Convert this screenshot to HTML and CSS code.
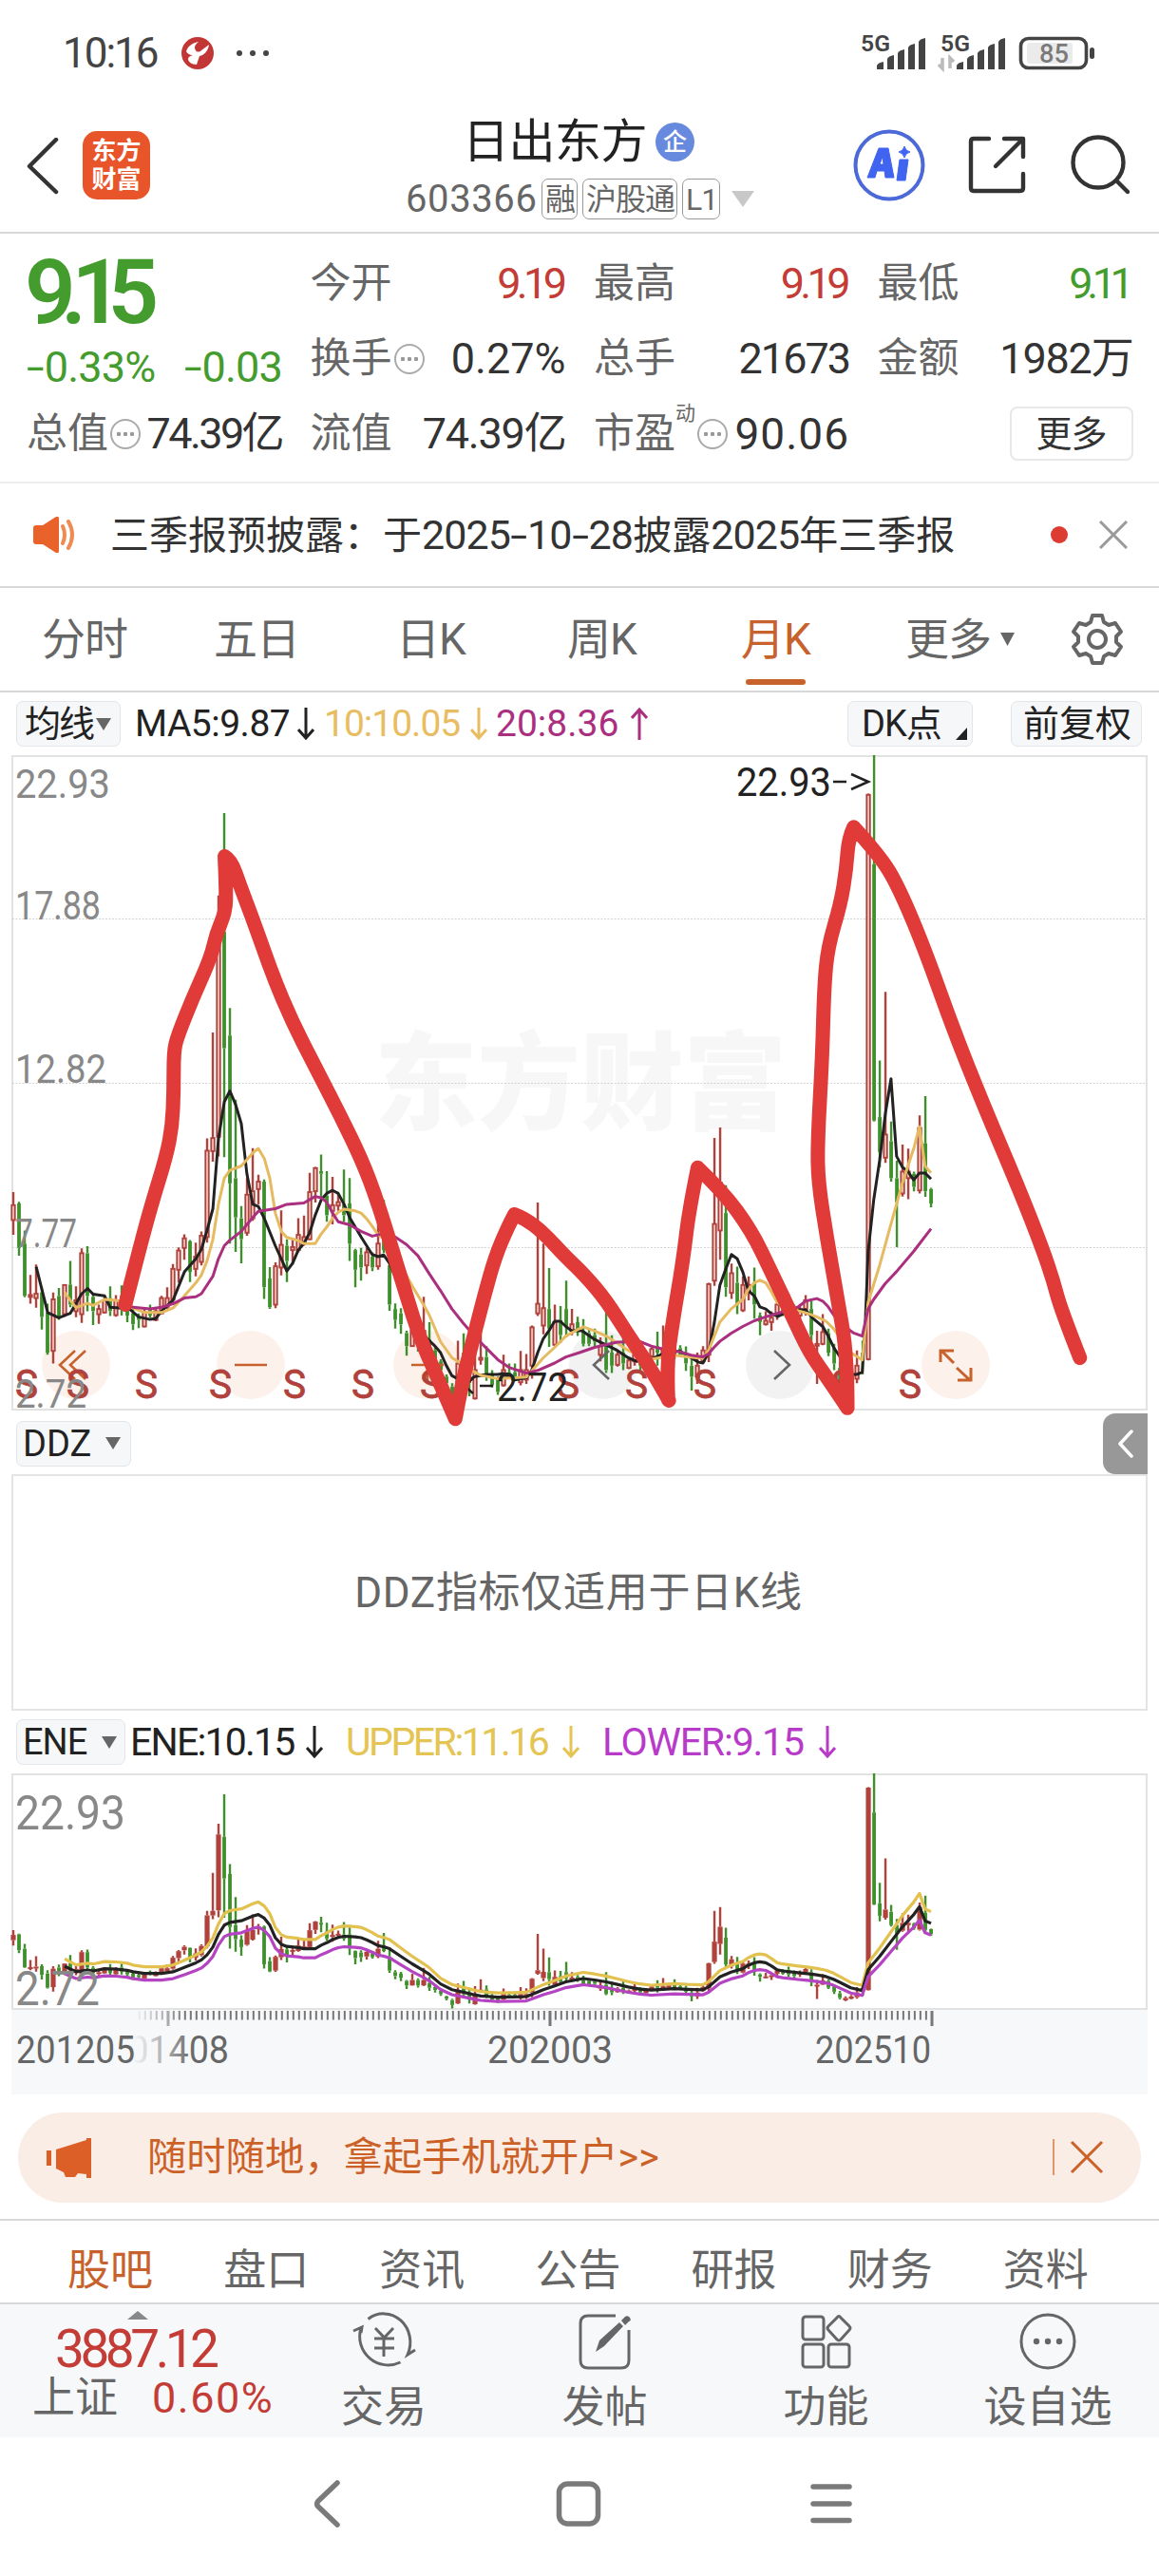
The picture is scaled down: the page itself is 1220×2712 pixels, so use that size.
FILE: index.html
```html
<!DOCTYPE html>
<html lang="zh-CN">
<head>
<meta charset="utf-8">
<title>日出东方 603366</title>
<link rel="stylesheet" href="styles.css">
</head>
<body>
<div class="status">
  <span class="time">10:16</span>
  <svg class="status-app" width="34" height="34" viewBox="0 0 34 34"><circle cx="17" cy="17" r="17" fill="#c23636"/><path d="M5 15C7 9 12 6 18 5c-4 3-5 6-3 9 1 2 4 2 6 0l8-6c-1 7-5 11-10 12l-3 9c-5 0-9-3-9-6 0-2 2-3 5-4-4 0-6-2-7-4z" fill="#fff"/></svg>
  <svg class="status-dots" width="36" height="8"><g fill="#444"><circle cx="4" cy="4" r="3"/><circle cx="18" cy="4" r="3"/><circle cx="32" cy="4" r="3"/></g></svg>
  <svg class="status-right" width="254" height="60" viewBox="0 0 254 60">
    <g fill="#444">
      <text x="1" y="19" class="sig" textLength="31" lengthAdjust="spacingAndGlyphs">5G</text>
      <text x="85" y="19" class="sig" textLength="31" lengthAdjust="spacingAndGlyphs">5G</text>
      <path id="bars" d="M18 38v-4q1-3 7-4v8zM29 38V27q1-3 7-4v15zM40 38V21q1-3 7-4v21zM51 38V15q1-3 7-4v27zM62 38V9q1-3 7-4v33z"/>
      <use href="#bars" x="84"/>
      <text x="189" y="31" class="bat" textLength="31" lengthAdjust="spacingAndGlyphs">85</text>
      <rect x="242" y="15" width="5" height="12" rx="2.5"/>
    </g>
    <path d="M87 26v11l-4-4M95 37V26l4 4" stroke="#bbb" stroke-width="3.5" fill="none"/>
    <rect x="176" y="10" width="48" height="22" rx="3" fill="#ccc" opacity=".4"/>
    <rect x="169.500" y="5.500" width="69" height="31" rx="8" fill="none" stroke="#444" stroke-width="3.600"/>
  </svg>
</div>

<header class="header">
  <svg class="back" width="36" height="60" viewBox="0 0 36 60"><path d="M32 2L4 30l28 27" fill="none" stroke="#333" stroke-width="4.500" stroke-linecap="round" stroke-linejoin="round"/></svg>
  <div class="logo"><span>东方</span><span>财富</span></div>
  <div class="heading">
    <div class="name">日出东方<b class="ent">企</b></div>
    <div class="code"><span class="num">603366</span><i>融</i><i>沪股通</i><i>L1</i><svg width="24" height="17"><path d="M0 0h24L12 17z" fill="#c8c8c8"/></svg></div>
  </div>
  <svg class="tools" width="300" height="80" viewBox="0 0 300 80">
    <circle cx="40" cy="40" r="35.500" fill="none" stroke="#4b69d8" stroke-width="4"/>
    <path fill-rule="evenodd" d="M17 53l12-31h10l6 31h-9l-1-7h-8l-2 7zM30 39h4l-1-8zM51 34h9l-3 22h-9zM56 20q1 5 6 6-5 1-6 6-1-5-6-6 5-1 6-6z" fill="#4064f0" stroke="#4064f0" stroke-width="1"/>
    <g fill="none" stroke="#333" stroke-width="4.400" stroke-linecap="round" stroke-linejoin="round">
      <path d="M145 12h-16q-3 0-3 3v49q0 3 3 3h49q3 0 3-3V49M161 12h20v19M180 13l-28 28"/>
      <circle cx="260" cy="37" r="26.500"/><path d="M279 56l12 12"/>
    </g>
  </svg>
</header>

<section class="stats">
  <div class="price"><div class="last">9.15</div><div class="chg"><span><u>-</u>0.33%</span><span><u>-</u>0.03</span></div></div>
  <div class="cell"><label>今开</label><b class="up one">9.19</b></div>
  <div class="cell"><label>最高</label><b class="up one">9.19</b></div>
  <div class="cell"><label>最低</label><b class="down two">9.11</b></div>
  <div class="cell"><label>换手</label><em class="info"></em><b class="wide">0.27%</b></div>
  <div class="cell"><label>总手</label><b class="vol">21673</b></div>
  <div class="cell"><label>金额</label><b>1982万</b></div>
  <div class="cell"><label>总值</label><em class="info"></em><b class="tight">74.39亿</b></div>
  <div class="cell"><label>流值</label><b>74.39亿</b></div>
  <div class="cell"><label>市盈</label><sup>动</sup><em class="info"></em><b class="pe">90.06</b></div>
  <div class="cell end"><span class="more">更多</span></div>
</section>

<section class="notice">
  <svg class="horn" width="46" height="38" viewBox="0 0 46 38"><path d="M0 12q0-3 3-3h7L24 0q3-1 3 2v34q0 3-3 2L10 29H3q-3 0-3-3z" fill="#e9622a"/><path d="M31 10q4 9 0 18M37 5q8 14 0 28" fill="none" stroke="#ee8a52" stroke-width="4" stroke-linecap="round"/></svg>
  <p>三季报预披露：于<span>2025<u>-</u>10<u>-</u>28</span>披露<span>2025</span>年三季报</p>
  <span class="dot"></span>
  <svg class="close" width="30" height="30"><path d="M1 1l28 28M29 1L1 29" stroke="#999" stroke-width="3"/></svg>
</section>

<nav class="tabs">
  <span>分时</span><span>五日</span><span>日K</span><span>周K</span><span class="on">月K</span><span class="drop">更多<svg width="15" height="14"><path d="M0 0h15L7.500 14z" fill="#666"/></svg></span>
  <svg class="gear" width="56" height="56" viewBox="0 0 56 56" fill="none" stroke="#666" stroke-width="4" stroke-linejoin="round"><path d="M23 3h10l2 7 5 3 7-2 6 9-5 5v6l5 5-6 9-7-2-5 3-2 7H23l-2-7-5-3-7 2-6-9 5-5v-6l-5-5 6-9 7 2 5-3z"/><circle cx="28" cy="28" r="9"/></svg>
</nav>

<div class="ma">
  <span class="btn avg">均线<svg width="16" height="13"><path d="M0 0h16L8 13z" fill="#666"/></svg></span>
  <span class="m5">MA5:9.87</span><svg class="arr" viewBox="0 0 18 34"><path d="M9 0v32M1 23l8 9 8-9"/></svg>
  <span class="m10">10:10.05</span><svg class="arr m10" viewBox="0 0 18 34"><path d="M9 0v32M1 23l8 9 8-9"/></svg>
  <span class="m20">20:8.36</span><svg class="arr m20" viewBox="0 0 18 34"><path d="M9 34V2M1 11l8-9 8 9"/></svg>
  <span class="btn dk">DK点<svg width="12" height="13"><path d="M12 0v13H0z" fill="#222"/></svg></span>
  <span class="btn fq">前复权</span>
</div>

<svg id="kline" class="kline" width="1220" height="690"></svg>

<div class="ddz-row"><span class="btn ddz">DDZ<svg width="16" height="13"><path d="M0 0h16L8 13z" fill="#666"/></svg></span>
  <span class="drawer"><svg width="18" height="30"><path d="M15 2L3 15l12 13" fill="none" stroke="#fff" stroke-width="3.500" stroke-linecap="round" stroke-linejoin="round"/></svg></span></div>
<div class="ddz-panel">DDZ指标仅适用于日K线</div>

<div class="ene-row">
  <span class="btn ene">ENE<svg width="16" height="13"><path d="M0 0h16L8 13z" fill="#666"/></svg></span>
  <span class="e1">ENE:10.15</span><svg class="arr" viewBox="0 0 18 34"><path d="M9 0v32M1 23l8 9 8-9"/></svg>
  <span class="e2">UPPER:11.16</span><svg class="arr e2" viewBox="0 0 18 34"><path d="M9 0v32M1 23l8 9 8-9"/></svg>
  <span class="e3">LOWER:9.15</span><svg class="arr e3" viewBox="0 0 18 34"><path d="M9 0v32M1 23l8 9 8-9"/></svg>
</div>
<svg id="ene" class="kline" width="1220" height="249"></svg>
<svg id="axis" class="kline" width="1220" height="89"></svg>

<div class="banner">
  <svg width="48" height="42" viewBox="0 0 48 42" fill="#dc5f27"><path d="M0 13h5v16H0zM10 12L42 2V0h5v42h-5v-4l-9-1-3 4H20l-2-5-8-4z"/></svg>
  <p>随时随地，拿起手机就开户&gt;&gt;</p>
  <svg class="bclose" width="54" height="40"><path d="M1 0v38" stroke="#d8793f" stroke-width="1.500"/><path d="M20 3l32 32M52 3L20 35" stroke="#cc6128" stroke-width="3"/></svg>
</div>

<nav class="subtabs"><span class="on">股吧</span><span>盘口</span><span>资讯</span><span>公告</span><span>研报</span><span>财务</span><span>资料</span></nav>

<footer class="dock">
  <div class="index">
    <svg width="22" height="9"><path d="M0 9h22L11 0z" fill="#888"/></svg>
    <strong>3887.12</strong>
    <div><span>上证</span><b>0.60%</b></div>
  </div>
  <div class="item"><svg width="64" height="64" viewBox="0 0 64 64"><path d="M15.500 8.500A28 30 0 0 1 57 46l8-5M8 18A30 30 0 0 0 49.500 54M0 21l9-4-1 6M23 18l9.500 10L42 18M32 28v20M22 29h21M22 39h21" stroke-width="3"/></svg><span>交易</span></div>
  <div class="item"><svg width="64" height="64" viewBox="0 0 64 64"><path d="M43 5H14q-8 0-8 8v39q0 8 8 8h35q8 0 8-8V20" stroke-width="3"/><path d="M22 43l4-12 21-19 4 4-20 21zM49 10l4-4q3-2 5 1t-1 4l-4 4z" fill="#666" stroke="none"/></svg><span>发帖</span></div>
  <div class="item"><svg width="64" height="64" viewBox="0 0 64 64" stroke-width="3"><rect x="7" y="6" width="22" height="24" rx="3"/><rect x="7" y="35" width="22" height="24" rx="3"/><rect x="34" y="35" width="22" height="24" rx="3"/><path d="M43 7q2-3 4 0l9 9q2 2 0 4l-9 10q-2 2-4 0l-9-10q-2-2 0-4z"/></svg><span>功能</span></div>
  <div class="item"><svg width="64" height="64" viewBox="0 0 64 64"><circle cx="32" cy="32" r="28" stroke-width="3"/><g fill="#666" stroke="none"><circle cx="20" cy="32" r="3.200"/><circle cx="32" cy="32" r="3.200"/><circle cx="44" cy="32" r="3.200"/></g></svg><span>设自选</span></div>
</footer>

<div class="sysnav">
  <svg width="1220" height="60" fill="none" stroke="#7a7a7a" stroke-width="5.500" stroke-linecap="round" stroke-linejoin="round"><path d="M355 9l-20 19q-3 3 0 6l20 19"/><rect x="588.500" y="10" width="41" height="42" rx="9"/><path d="M856 13h38M856 31h38M856 48.500h38"/></svg>
</div>
<script src="chart.js"></script>
</body>
</html>
```

FILE: styles.css
```css
* { box-sizing: border-box; margin: 0; padding: 0; }
body { width: 1220px; height: 2712px; overflow: hidden; background: #fff; color: #333; font-family: Roboto, "Noto Sans CJK SC", sans-serif; line-height: 1; }
svg { display: block; flex: none; }
b, i, em { font-style: normal; font-weight: 400; }
span, b, label, i, p { white-space: nowrap; }
/* hyphens are drawn as wide as a digit's stem-to-stem width */
u { text-decoration: none; display: inline-block; transform: scaleX(1.5); margin: 0 4px 0 3px; }

.status { height: 112px; padding-left: 66px; display: flex; align-items: center; }
.time { font-size: 44px; color: #444; width: 125px; letter-spacing: -2px; }
.status-app { margin-right: 23px; }
.status-right { margin-left: 621px; margin-top: 18px; overflow: visible; }
.sig { font-size: 24px; font-weight: 600; }
.bat { font-size: 27px; font-weight: 500; }

.header { height: 134px; border-bottom: 2px solid #d6d8da; display: flex; padding-left: 27px; position: relative; }
.back { margin-top: 33px; }
.logo { width: 71px; height: 72px; margin: 26px 0 0 24px; border-radius: 15px; background: #e9552a; color: #fff; font-size: 26px; font-weight: 700; display: flex; flex-direction: column; align-items: center; justify-content: center; gap: 4px; }
.heading { width: 500px; margin-left: 209px; padding: 13px 0 0 60px; }
.name { font-size: 49px; letter-spacing: -.5px; color: #222; height: 58px; width: 320px; margin-left: 60px; display: flex; align-items: flex-start; }
.ent { width: 41px; height: 41px; margin: 4px 0 0 9px; border-radius: 50%; background: #688ade; color: #fff; font-size: 25px; font-weight: 500; display: grid; place-items: center; letter-spacing: 0; }
.code { display: flex; align-items: center; height: 43px; margin-top: 5px; font-size: 40px; color: #666; }
.code .num { width: 143px; letter-spacing: .6px; }
.code i { height: 43px; border: 1.500px solid #999; border-radius: 7px; font-size: 32px; letter-spacing: -1px; padding: 0 2px 0 3px; margin-right: 5px; display: flex; align-items: center; }
.code svg { margin-left: 7px; }
.header .tools { position: absolute; left: 896px; top: 22px; }

.stats { height: 263px; border-bottom: 2px solid #ececec; padding: 13px 27px 0 28px; display: grid; grid-template-columns: 269px 269px 269px 269px; grid-template-rows: 79px 79px 79px; column-gap: 29.500px; }
.price { grid-row: span 2; color: #439c2d; }
.last { font-size: 94px; font-weight: 600; letter-spacing: -15.500px; padding-top: 2px; margin-left: -2px; }
.chg { display: flex; justify-content: space-between; font-size: 45px; letter-spacing: -.8px; margin-top: 9px; }
.cell { display: flex; align-items: center; font-size: 43px; letter-spacing: -1.200px; }
.cell label { color: #666; letter-spacing: 0; }
.cell b { margin-left: auto; font-size: 45px; }
.cell b.tight { letter-spacing: -2.600px; }
.cell b.one { letter-spacing: -4.600px; margin-right: 3px; }
.cell b.two { letter-spacing: -6.400px; margin-right: 5px; }
.cell b.wide { letter-spacing: 0; }
.cell b.vol { letter-spacing: -2px; }
.cell b.pe { letter-spacing: 1px; font-size: 46px; }
.up { color: #c43c36; }
.down { color: #439c2d; }
.info { width: 32px; height: 32px; margin-left: 2px; border: 2px solid #aaa; border-radius: 50%; background: radial-gradient(circle at 7px 14px, #999 2px, transparent 2.500px), radial-gradient(circle at 14px 14px, #999 2px, transparent 2.500px), radial-gradient(circle at 21px 14px, #999 2px, transparent 2.500px); }
.cell sup { font-size: 21px; color: #666; margin-top: -42px; margin-right: 1px; }
.cell.end { justify-content: flex-end; }
.more { width: 130px; height: 57px; border: 2px solid #e8e8e8; border-radius: 8px; font-size: 38px; letter-spacing: -1px; display: grid; place-items: center; }

.notice { height: 110px; border-bottom: 2px solid #d6d8da; display: flex; align-items: center; padding-left: 35px; }
.notice p { font-size: 41px; margin-left: 35px; width: 992px; }
.notice p span { font-size: 43px; letter-spacing: -.9px; }
.dot { width: 18px; height: 18px; border-radius: 50%; background: #dc3c32; margin-left: -2px; }
.notice .close { margin-left: 33px; }

.tabs { height: 110px; border-bottom: 2px solid #d6d8da; display: flex; align-items: center; color: #666; font-size: 46px; padding-left: 44px; position: relative; letter-spacing: -1px; }
.tabs span { width: 181px; height: 108px; display: flex; align-items: center; }
.tabs span:nth-child(2) { width: 192px; }
.tabs span:nth-child(3) { width: 180px; }
.tabs span:nth-child(4) { width: 183px; }
.tabs span:nth-child(5) { width: 173px; }
.tabs .on { color: #c8622c; position: relative; }
.tabs .on::after { content: ""; position: absolute; left: 5px; bottom: 6px; width: 63px; height: 6px; border-radius: 3px; background: #c8622c; }
.tabs .drop svg { margin-left: 10px; }
.tabs .drop { width: 174px; }

.btn { display: flex; align-items: center; height: 48px; background: #f6f7f9; border: 1.500px solid #e2e5e9; border-radius: 7px; color: #222; font-size: 38px; flex: none; }
.arr { width: 18px; height: 34px; fill: none; stroke: currentColor; stroke-width: 3; }
.ma { height: 66px; display: grid; grid-template-columns: 125px 171px 28px 154px 27px 142px 228px 172px 138px; padding-left: 17px; align-items: center; font-size: 39px; color: #222; }
.avg { width: 110px; padding-left: 8px; letter-spacing: -2px; }
.avg svg { margin-left: 3px; }
.m5 { letter-spacing: -.5px; }
.m10 { color: #e8bd62; letter-spacing: -1px; }
.m20 { color: #ab2f7f; }
.dk { width: 132px; padding-left: 14px; position: relative; letter-spacing: -1px; }
.dk svg { position: absolute; right: 5px; bottom: 6px; }
.fq { width: 138px; padding-left: 12px; }

.ddz-row { height: 67px; display: flex; align-items: center; justify-content: space-between; padding: 2px 12px 0 17px; }
.ddz { width: 121px; padding-left: 6px; letter-spacing: 0; }
.ddz svg { margin-left: auto; margin-right: 10px; }
.drawer { width: 47px; height: 64px; background: #989898; border-radius: 13px 0 0 13px; display: grid; place-items: center; }
.ddz-panel { height: 249px; margin: 0 12px; border: 2px solid #e4e4e4; display: grid; place-items: center; color: #666; font-size: 44px; letter-spacing: .7px; padding-right: 2px; }
.ene-row { height: 66px; display: grid; grid-template-columns: 120px 185px 42px 228px 42px 228px 30px; padding-left: 17px; align-items: center; font-size: 41px; color: #222; }
.ene { width: 115px; padding-left: 6px; letter-spacing: -1px; }
.ene svg { margin-left: 16px; }
.e1 { letter-spacing: -1.800px; }
.e2 { color: #e4c452; letter-spacing: -2.500px; }
.e3 { color: #b83ac8; letter-spacing: -1.200px; }
.kline { overflow: visible; position: relative; z-index: 1; }
.kline text { font-family: Roboto, "Noto Sans CJK SC", sans-serif; }
.wm { font-size: 112px; font-weight: 900; fill: #f7f7f7; }
.sell { font-size: 42px; fill: #b0413b; stroke: #b0413b; stroke-width: .8px; }
.scale { font-size: 42px; fill: #888; }
.scale2 { font-size: 50px; fill: #888; }
.mark { font-size: 42px; fill: #222; }
.date { font-size: 40px; fill: #666; }

.banner { height: 95px; margin: 19px 19px 0; border-radius: 48px; background: #faede6; display: flex; align-items: center; padding-left: 30px; color: #cc6128; }
.banner p { font-size: 41.300px; margin-left: 58px; width: 953px; }

.subtabs { height: 88px; margin-top: 17px; border-top: 2px solid #d6d8da; display: flex; padding-left: 71px; align-items: center; color: #666; font-size: 45px; padding-top: 18px; }
.subtabs span { width: 164.300px; }
.subtabs .on { color: #c8622c; }

.dock { height: 142px; background: #f7f8fa; border-top: 2px solid #d6d8da; display: grid; grid-template-columns: 288px 232px 233px 233px 234px; color: #666; }
.index { position: relative; padding: 7px 0 0 34px; }
.index > svg { margin-left: 100px; }
.index strong { display: block; margin: 4px 0 0 24px; font-size: 55px; font-weight: 400; letter-spacing: -4.500px; color: #c43c36; }
.index div { display: flex; font-size: 45px; margin-top: 1px; align-items: center; white-space: nowrap; }
.index div b { margin-left: 36px; color: #c43c36; letter-spacing: 1.500px; }
.item { display: flex; flex-direction: column; align-items: center; font-size: 45px; padding-top: 7px; gap: 15px; }
.item svg { fill: none; stroke: #666; overflow: visible; }
.sysnav { height: 148px; padding-top: 39px; }
```

FILE: chart.js
```javascript
// Chart geometry: x and level are stored in grid units; the level grid
// runs from 30 (22.93) to 1532 (2.72).
const X = u => u / 2.5705;
const candleX = i => 36 + 15.424 * i;
const RED = "#b0413b", GREEN = "#3f8f2d";

// One candle per month: direction, high, body top, body bottom, low.
const candles = `r1032,1062,1096,1130 g1054,1058,1160,1178 g1120,1150,1270,1273 r1222,1268,1272,1288 r1198,1265,1275,1297 g1250,1262,1318,1347
g1288,1308,1400,1405 r1262,1278,1396,1425 g1252,1270,1315,1325 r1243,1245,1312,1318 g1190,1244,1290,1296 r1248,1280,1305,1319
r1161,1172,1312,1332 g1156,1172,1270,1305 g1262,1272,1305,1337 r1290,1300,1312,1334 r1270,1280,1308,1310 g1248,1275,1305,1316
r1268,1280,1314,1318 g1246,1270,1298,1315 g1280,1290,1315,1330 g1300,1310,1335,1348 g1310,1318,1325,1344 r1300,1308,1340,1342
g1290,1300,1315,1320 r1296,1305,1325,1328 r1270,1275,1310,1312 r1250,1275,1295,1300 r1197,1208,1278,1284 r1159,1166,1210,1240
r1129,1138,1160,1187 g1142,1145,1215,1238 r1148,1180,1208,1225 r1122,1132,1192,1200 r909,937,1135,1148 r666,908,938,962
r352,420,905,950 g163,435,702,952 g610,673,1012,1150 g820,1000,1090,1169 g1064,1092,1140,1195 r1000,1038,1125,1132
r931,1030,1092,1098 r992,1008,1025,1060 g1003,1008,1250,1277 g1204,1230,1296,1300 r1193,1202,1290,1298 r1074,1153,1205,1223
g1140,1155,1190,1238 r1140,1158,1165,1198 r1092,1130,1165,1170 r1086,1135,1148,1155 r988,1032,1140,1142 r974,977,1030,1056
g946,984,990,1045 g984,1040,1085,1100 r997,1062,1075,1106 r1035,1055,1063,1075 g980,1060,1085,1100 g1000,1058,1150,1190
g1162,1165,1210,1250 g1160,1175,1205,1235 r1160,1170,1200,1220 g1170,1180,1205,1213 r1100,1150,1202,1210 g1050,1130,1165,1172
g1140,1200,1290,1304 g1287,1300,1325,1345 g1298,1310,1335,1357 g1350,1355,1385,1407 r1310,1350,1385,1387 g1340,1350,1385,1398
r1272,1350,1385,1390 g1330,1370,1400,1420 g1385,1395,1415,1430 g1415,1420,1440,1452 g1450,1455,1470,1480 g1470,1478,1510,1532
r1373,1425,1500,1505 g1356,1400,1440,1450 g1400,1430,1470,1500 r1390,1440,1505,1508 r1345,1412,1416,1428 g1385,1410,1450,1465
g1440,1450,1475,1480 g1455,1460,1490,1497 r1405,1440,1475,1478 g1425,1445,1455,1460 g1425,1445,1460,1462 r1396,1440,1468,1475
r1403,1440,1462,1472 r1338,1342,1430,1460 r1056,1288,1310,1316 r1150,1298,1338,1358 g1206,1300,1345,1387 r1290,1330,1382,1385
g1293,1325,1360,1378 g1235,1300,1340,1365 r1300,1335,1350,1360 g1318,1330,1350,1362 g1323,1350,1380,1386 g1345,1355,1380,1385
g1345,1360,1375,1386 r1365,1385,1405,1420 g1300,1380,1440,1447 g1360,1400,1430,1447 r1395,1405,1428,1432 g1350,1400,1425,1440
r1410,1418,1435,1438 r1375,1405,1420,1430 g1395,1410,1430,1445 r1405,1415,1435,1440 r1385,1392,1408,1420 g1352,1385,1400,1430
r1338,1390,1405,1420 r1370,1385,1400,1410 g1345,1380,1405,1415 g1383,1390,1405,1410 g1386,1400,1425,1442 g1405,1430,1455,1487
r1400,1430,1455,1472 r1385,1395,1420,1425 r1240,1243,1405,1422 r908,1105,1235,1247 r884,1010,1120,1187 g1016,1080,1250,1272
r1196,1218,1263,1277 g1203,1240,1290,1312 r1225,1245,1303,1307 r1225,1245,1260,1280 g1205,1240,1290,1322 g1308,1315,1330,1360
r1305,1327,1335,1338 r1305,1320,1330,1350 r1280,1290,1310,1325 g1280,1290,1310,1316 g1265,1285,1315,1330 g1290,1300,1325,1340
r1290,1300,1315,1330 r1268,1280,1300,1315 g1282,1300,1360,1390 r1350,1380,1384,1472 r1312,1353,1380,1383 g1345,1355,1400,1408
g1380,1390,1425,1440 g1420,1435,1465,1475 r1455,1465,1480,1485 r1445,1455,1470,1475 r1395,1430,1460,1470 g1372,1400,1415,1450
r118,121,1415,1418 g30,280,868,870 g730,860,940,975 r573,900,953,965 g870,915,1000,1008 g960,1000,1055,1158
r923,985,1035,1042 r932,985,1000,1048 g985,990,1020,1030 r856,885,1028,1035 g812,920,1030,1043 g1022,1025,1058,1067`
  .split(/\s+/).map(s => [s[0], ...s.slice(1).split(",").map(Number)]);

const pts = s => s.trim().split(/\s+/).map(p => p.split(",").map(Number));
const ma5 = pts(`98,1203 129,1308 159,1320 190,1310 221,1265 237,1253 252,1266 283,1270 298,1296 329,1298 344,1295 375,1318 406,1324 421,1322 437,1305 468,1280 499,1215 530,1185 545,1163 560,1120 576,1070 591,910 607,825 622,800 637,830 653,875 668,990 684,1060 699,1065 714,1090 745,1155 776,1213 792,1195 807,1165 822,1150 838,1125 853,1085 869,1050 884,1035 900,1028 915,1035 931,1060 946,1090 977,1135 1007,1175 1023,1180 1038,1176 1054,1195 1069,1225 1085,1250 1115,1300 1146,1360 1177,1385 1192,1400 1208,1430 1223,1453 1239,1460 1270,1462 1285,1455 1316,1450 1347,1450 1362,1448 1393,1463 1424,1458 1439,1440 1455,1400 1470,1368 1485,1350 1501,1328 1516,1328 1531,1340 1547,1350 1575,1350 1609,1370 1640,1382 1670,1395 1700,1412 1722,1420 1762,1415 1800,1400 1840,1397 1870,1412 1890,1422 1902,1424 1917,1400 1933,1330 1948,1245 1963,1210 1979,1175 1995,1185 2010,1215 2025,1258 2041,1270 2056,1295 2072,1300 2087,1311 2105,1317 2125,1308 2160,1302 2180,1302 2200,1322 2226,1340 2241,1362 2257,1390 2275,1412 2302,1450 2318,1450 2333,1445 2341,1340 2349,1170 2364,1050 2380,960 2396,850 2411,772 2426,950 2442,975 2457,985 2472,1004 2488,988 2503,988 2519,1002`);
const ma10 = pts(`175,1262 190,1280 206,1297 237,1287 252,1292 283,1278 314,1280 344,1288 360,1298 391,1308 437,1308 468,1298 499,1270 530,1240 545,1222 560,1190 576,1140 591,1060 607,1000 622,982 653,972 684,942 699,932 715,955 730,1000 745,1080 761,1122 776,1136 807,1143 822,1150 853,1150 869,1128 884,1112 900,1092 915,1078 931,1071 961,1075 977,1080 992,1093 1007,1110 1023,1130 1038,1138 1054,1150 1085,1200 1115,1247 1146,1290 1162,1315 1192,1375 1223,1412 1254,1428 1285,1445 1301,1452 1347,1460 1393,1458 1424,1456 1439,1442 1470,1412 1501,1388 1531,1362 1568,1345 1578,1341 1609,1350 1640,1362 1670,1378 1700,1395 1732,1408 1762,1415 1824,1406 1860,1410 1901,1413 1917,1395 1948,1330 1978,1300 2010,1278 2025,1255 2041,1240 2056,1234 2072,1240 2087,1260 2103,1285 2118,1292 2160,1304 2185,1310 2210,1318 2235,1328 2255,1345 2270,1362 2302,1400 2333,1417 2349,1285 2380,1200 2411,1105 2442,1010 2473,930 2488,882 2503,972 2519,988`);
const ma20 = pts(`329,1285 360,1296 406,1300 437,1296 468,1288 499,1275 530,1272 545,1265 576,1225 591,1185 607,1155 622,1142 653,1122 684,1090 699,1076 745,1070 776,1060 822,1057 853,1042 869,1045 884,1055 900,1080 915,1100 946,1107 977,1122 1007,1133 1038,1127 1069,1135 1100,1152 1131,1178 1162,1220 1192,1258 1223,1300 1254,1333 1285,1363 1316,1390 1347,1416 1377,1434 1424,1447 1455,1441 1501,1424 1531,1410 1568,1400 1609,1388 1670,1376 1732,1375 1762,1385 1793,1392 1840,1398 1870,1406 1901,1410 1917,1403 1932,1388 1948,1374 1978,1356 2010,1340 2041,1327 2072,1318 2103,1310 2135,1303 2160,1295 2180,1282 2210,1276 2226,1282 2241,1295 2257,1315 2285,1340 2310,1355 2333,1362 2349,1300 2364,1278 2395,1242 2426,1214 2472,1168 2519,1116`);

// Freehand marker drawn over the chart, one list per stroke between peaks.
const marker = [
  "339,1290 375,1170 410,1060 450,950 466,880 470,800 470,710 480,675 520,590 570,495 585,440 610,390 612,340 608,264",
  "608,262 625,270 650,330 690,420 740,540 790,640 850,740 920,855 980,960 1020,1050 1060,1160 1100,1270 1135,1365 1180,1450 1232,1552",
  "1232,1552 1250,1470 1280,1370 1310,1270 1340,1180 1375,1110 1392,1083",
  "1392,1083 1420,1092 1470,1125 1530,1180 1580,1220 1640,1280 1700,1360 1760,1435 1810,1510",
  "1808,1508 1804,1430 1820,1330 1848,1190 1865,1070 1888,976",
  "1888,976 1955,1030 2033,1120 2090,1220 2140,1310 2190,1400 2240,1460 2293,1527",
  "2293,1527 2293,1410 2265,1270 2238,1140 2214,1010 2212,920 2225,720 2230,560 2240,470 2275,370 2290,290 2296,220 2310,195",
  "2310,195 2380,260 2430,330 2500,470 2580,660 2660,830 2760,1030 2820,1160 2850,1235 2870,1300 2922,1412"
].map(pts);

const line = (p, y, c, w) => `<polyline points="${p.map(q => X(q[0]).toFixed(1) + "," + y(q[1]).toFixed(1)).join(" ")}" fill="none" stroke="${c}" stroke-width="${w}" stroke-linejoin="round"/>`;

function smooth(p, y) {
  const a = p.map(q => [X(q[0]), y(q[1])]);
  let d = `M${a[0]}`;
  for (let i = 1; i < a.length - 1; i++) {
    const end = i === a.length - 2 ? a[i + 1] : [(a[i][0] + a[i + 1][0]) / 2, (a[i][1] + a[i + 1][1]) / 2];
    d += `Q${a[i]} ${end}`;
  }
  return d;
}

function drawCandles(y, hollow) {
  return candles.map(([k, hi, top, bot, lo], i) => {
    const x = X(candleX(i)), c = k === "r" ? RED : GREEN;
    const h = Math.max(y(bot) - y(top), 2);
    const wick = `<path d="M${x} ${y(hi)}V${y(top)}M${x} ${y(bot)}V${y(lo)}" stroke="${c}" stroke-width="2.4"/>`;
    const body = k === "r" && hollow
      ? `<rect x="${x - 1.7}" y="${y(top)}" width="3.4" height="${h}" fill="#f6dfd8" stroke="${c}" stroke-width="1.9"/>`
      : `<rect x="${x - (k === "r" ? 2.6 : 1.9)}" y="${y(top)}" width="${k === "r" ? 5.2 : 3.8}" height="${h}" fill="${c}"/>`;
    return wick + body;
  }).join("");
}

const label = (cls, x, y, t, w, extra = "") => `<text class="${cls}" x="${x}" y="${y}" textLength="${w}" lengthAdjust="spacingAndGlyphs" ${extra}>${t}</text>`;

function drawMain() {
  const y = u => (u - 30) / 2.178;
  let s = label("wm", 394, 386, "东方财富", 434);
  s += `<rect x="13" y="1" width="1194" height="688" fill="none" stroke="#e2e2e2" stroke-width="2"/>`;
  for (const g of [172.5, 345.5, 518.5]) s += `<path d="M13 ${g}H1207" stroke="#d2d2d2" stroke-dasharray="2 1.5"/>`;
  for (const [x, c] of [[80, "#fcf1eb"], [264, "#fcf1eb"], [450, "#fcf1eb"], [635, "#f2f2f2"], [821, "#f2f2f2"], [1006, "#fcf1eb"]])
    s += `<circle cx="${x}" cy="642" r="36" fill="${c}"/>`;
  s += drawCandles(y, true);
  s += line(ma5, y, "#222", 3) + line(ma10, y, "#e6ba60", 3) + line(ma20, y, "#ab2f7f", 3);
  s += `<g fill="none" stroke="#c8622c" stroke-width="2.6"><path d="M79 627L63 642l16 15M90 627L74 642l16 15M247 642h34M433 642h34M450 626v33"/>
    <path d="M1004 640L991 627M990 639v-12h14M1007 645l14 13M1008 658h14v-13" stroke-width="3"/></g>
    <path d="M641 627l-16 15 16 15M815 627l16 15-16 15" fill="none" stroke="#666" stroke-width="2.6"/>`;
  for (const x of [28, 82, 154, 232, 310, 382, 454, 598, 670, 742, 887, 958])
    s += label("sell", x - 12, 677, "S", 24);
  for (const [t, w, by] of [["22.93", 100, 45], ["17.88", 90, 173], ["12.82", 96, 345], ["7.77", 65, 518], ["2.72", 75, 687]])
    s += label("scale", 16, by, t, w);
  s += label("mark", 775, 43, "22.93", 100) + `<path d="M877 28h14M896 20l18 8-18 8M505 664h14M498 656l-9 8 9 8" fill="none" stroke="#222" stroke-width="2.6"/>`;
  s += label("mark", 523, 680, "2.72", 75);
  s += `<path d="${marker.map(m => smooth(m, y)).join("")}" fill="none" stroke="#e03b38" stroke-width="15" stroke-linecap="round" stroke-linejoin="round"/>`;
  document.getElementById("kline").innerHTML = s;
}

function drawEne() {
  const y = u => (u - 30) / 1502 * 247.5;
  // Envelope: the bands sit 10% of the price above and below the middle line.
  const band = k => ma10.map(([x, u]) => {
    const price = 22.93 - (u - 30) / 1502 * 20.21;
    return [x, 30 + (22.93 - price * k) / 20.21 * 1502];
  });
  let s = `<rect x="13" y="1" width="1194" height="247" fill="none" stroke="#e2e2e2" stroke-width="2"/>`;
  s += drawCandles(y, false);
  s += line(band(1.1), y, "#e2c14f", 3.2) + line(ma10, y, "#222", 3.2) + line(band(.9), y, "#b544c2", 3.2);
  s += label("scale2", 16, 59, "22.93", 116) + label("scale2", 16, 244, "2.72", 89);
  document.getElementById("ene").innerHTML = s;
}

function drawAxis() {
  let s = `<defs><linearGradient id="fade" gradientUnits="userSpaceOnUse" x1="140" x2="205" y1="0" y2="0"><stop offset="0" stop-color="#666" stop-opacity="0"/><stop offset="1" stop-color="#666"/></linearGradient></defs>
    <rect x="12" y="0" width="1196" height="89" fill="#f7f8fa"/>`;
  for (let i = 22; i <= 160; i++) {
    const x = X(candleX(i)) + .8;
    s += `<rect x="${x - 1}" y="1" width="2" height="9.500" fill="#777" opacity="${Math.min(1, (i - 21) / 9)}"/>`;
  }
  for (const [x, c] of [[177, "#aaa"], [579, "#777"], [981, "#777"]]) s += `<rect x="${x - 1.5}" y="1" width="3" height="16" fill="${c}"/>`;
  s += label("date", 114, 56, "201408", 127, 'style="fill:url(#fade)"') + label("date", 17, 56, "201205", 125);
  s += label("date", 513, 56, "202003", 132) + label("date", 858, 56, "202510", 122);
  document.getElementById("axis").innerHTML = s;
}

drawMain();
drawEne();
drawAxis();
```
